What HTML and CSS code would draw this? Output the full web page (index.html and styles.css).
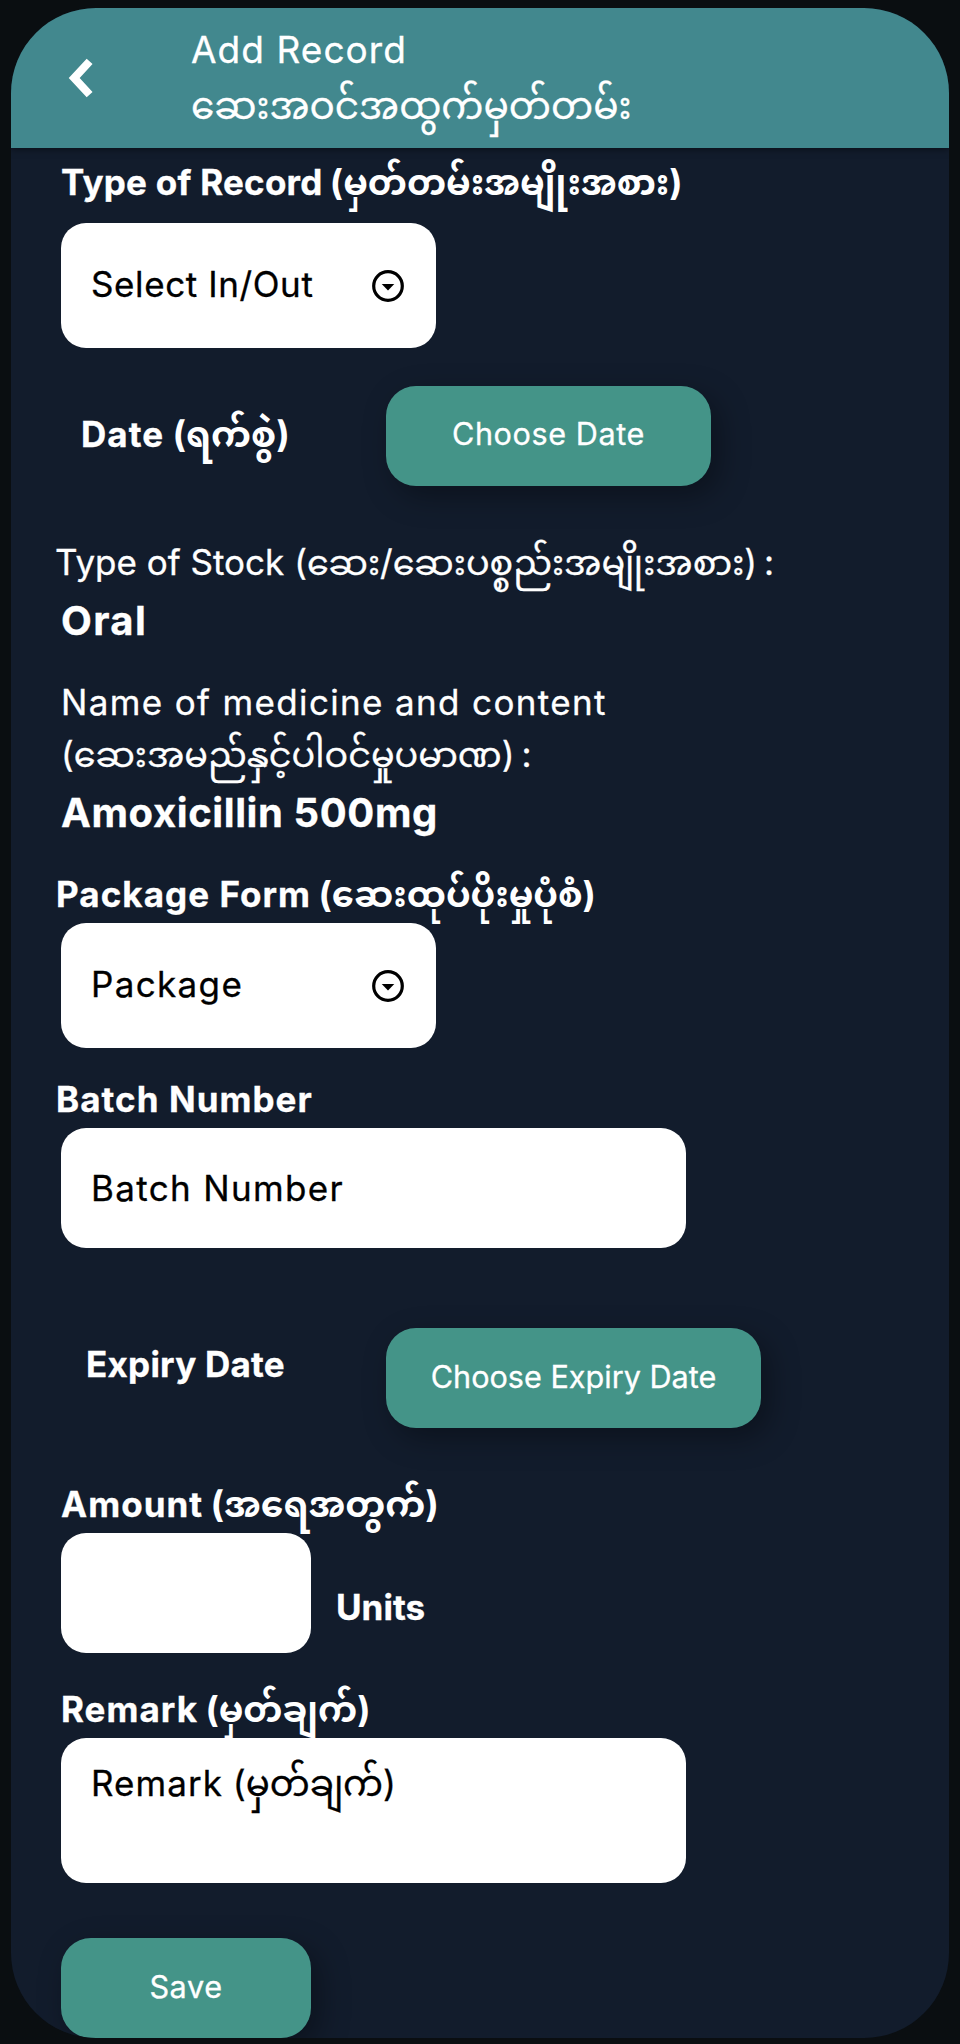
FILE: index.html
```html
<!DOCTYPE html>
<html lang="en">
<head>
<meta charset="utf-8">
<title>Add Record</title>
<link rel="stylesheet" href="styles.css">
</head>
<body>
<main class="phone">
  <header class="header">
    <svg class="back" viewBox="0 0 26 40"><path d="M23.6 3.4 8.2 20l15.4 16.6" fill="none" stroke="#fff" stroke-width="8"/></svg>
    <div class="titles">
      <div class="title"><span class="ls-wide">Add Record</span></div>
      <div class="title"><span class="my title-my" lang="my">ဆေးအဝင်အထွက်မှတ်တမ်း</span></div>
    </div>
  </header>
  <form class="form">
    <div class="line bold"><span class="ls-small">Type of Record</span> <span class="my" lang="my">(မှတ်တမ်းအမျိုးအစား)</span></div>
    <div class="select first"><span class="ls-select">Select In/Out</span>
      <svg class="caret" viewBox="0 0 32 32"><circle cx="16" cy="16" r="14.3"/><path d="M9.7 14h12.6L16 20.6z"/></svg></div>
    <div class="row date">
      <div class="line bold"><span class="ls-wide">Date</span> <span class="my date-my" lang="my">(ရက်စွဲ)</span></div>
      <div class="button choose"><span class="ls-mid">Choose Date</span></div>
    </div>
    <div class="line stock"><span>Type of Stock</span> <span class="my colon" lang="my">(ဆေး/ဆေးပစ္စည်းအမျိုးအစား) :</span></div>
    <div class="value"><span class="ls-oral">Oral</span></div>
    <div class="line name"><span class="ls-name">Name of medicine and content</span></div>
    <div class="line name-my"><span class="my colon" lang="my">(ဆေးအမည်နှင့်ပါဝင်မှုပမာဏ) :</span></div>
    <div class="value"><span class="ls-mid">Amoxicillin 500mg</span></div>
    <div class="line bold package"><span class="ls-wide">Package Form</span> <span class="my" lang="my">(ဆေးထုပ်ပိုးမှုပုံစံ)</span></div>
    <div class="select"><span class="ls-name">Package</span>
      <svg class="caret" viewBox="0 0 32 32"><circle cx="16" cy="16" r="14.3"/><path d="M9.7 14h12.6L16 20.6z"/></svg></div>
    <div class="line bold batch"><span class="ls-wide">Batch Number</span></div>
    <div class="input wide"><span class="ls-name">Batch Number</span></div>
    <div class="row expiry">
      <div class="line bold"><span class="ls-small">Expiry Date</span></div>
      <div class="button choose-expiry"><span>Choose Expiry Date</span></div>
    </div>
    <div class="line bold amount"><span class="ls-wide">Amount</span> <span class="my amount-my" lang="my">(အရေအတွက်)</span></div>
    <div class="row"><div class="input small"></div><div class="line bold units">Units</div></div>
    <div class="line bold remark"><span class="ls-wide">Remark</span> <span class="my" lang="my">(မှတ်ချက်)</span></div>
    <div class="textarea"><span class="ls-wide">Remark</span> <span class="my remark-my" lang="my">(မှတ်ချက်)</span></div>
    <div class="button save"><span class="ls-mid">Save</span></div>
  </form>
</main>
</body>
</html>
```
FILE: styles.css
```css
* { box-sizing: border-box; }
body { margin: 0; height: 2044px; padding: 8px 11px 6px; background: #0a0e11; color: #fff; font-family: Inter, "Noto Sans Myanmar", "Noto Sans", sans-serif; -webkit-text-stroke: .3px currentColor; overflow: hidden; }
.phone { height: 2030px; border-radius: 85px; background: #121c2c; overflow: hidden; }

/* Header */
.header { display: flex; height: 140px; padding: 13px 0 0 55px; background: #42888e; box-shadow: 0 1px 7px rgba(0,0,0,.5); }
.back { width: 26px; height: 40px; margin-top: 37px; overflow: visible; }
.titles { margin-left: 99px; }
.title { height: 56px; font-size: 37px; line-height: 57px; white-space: nowrap; }

/* Text runs */
.my { line-height: 1; }
.title-my { font-size: 37.5px; }
.bold .my { margin-left: -1px; font-size: 35.3px; -webkit-text-stroke-width: 0; }
.bold .amount-my { font-size: 36.1px; }
.bold .date-my { margin-left: 0; font-size: 36px; }
.remark-my { font-size: 35.6px; }
.colon { word-spacing: -3px; }
.ls-small { letter-spacing: .25px; }
.ls-select { letter-spacing: .6px; }
.ls-mid { letter-spacing: .6px; }
.ls-wide { letter-spacing: 1.05px; }
.ls-name { letter-spacing: 1.35px; }
.ls-oral { letter-spacing: 1.4px; }

/* Form */
.form { padding: 10px 0 0 50px; font-size: 35px; line-height: 48px; }
.line { height: 50px; white-space: nowrap; }
.bold { font-weight: 700; }
.value { height: 60px; margin-top: 2px; font-size: 40px; line-height: 62px; font-weight: 700; }
.row { display: flex; }
.select, .input, .textarea { margin-top: 3px; border-radius: 25px; background: #fff; color: #000; padding: 0 32px 0 30px; white-space: nowrap; }
.select { display: flex; align-items: center; justify-content: space-between; width: 375px; height: 125px; }
.select span { margin-top: -4px; }
.first { margin-top: 15px; }
.caret { width: 32px; height: 32px; fill: #000; }
.caret circle { fill: none; stroke: #000; stroke-width: 3.2; }
.input { display: flex; align-items: center; height: 120px; }
.wide { width: 625px; }
.small { width: 250px; }
.textarea { width: 625px; height: 145px; padding-top: 21px; }
.button { display: flex; align-items: center; justify-content: center; height: 100px; padding-bottom: 4px; border-radius: 30px; background: #449488; font-size: 30.6px; box-shadow: 8px 10px 30px rgba(0,0,0,.34); white-space: nowrap; }
.date { margin-top: 38px; }
.date .line { width: 325px; margin-top: 24px; padding-left: 20px; }
.choose { width: 325px; }
.stock { margin: 52px 0 0 -6px; }
.name { margin-top: 28px; }
.name-my { margin-top: 2px; }
.package { margin: 28px 0 0 -5px; }
.batch { margin: 27px 0 0 -5px; }
.expiry { margin-top: 80px; }
.expiry .line { width: 325px; margin-top: 12px; padding-left: 25px; }
.choose-expiry { width: 375px; padding-bottom: 2px; }
.amount { margin-top: 52px; }
.units { margin: 53px 0 0 25px; }
.remark { margin-top: 32px; }
.save { width: 250px; margin-top: 55px; padding-bottom: 3px; }
```
